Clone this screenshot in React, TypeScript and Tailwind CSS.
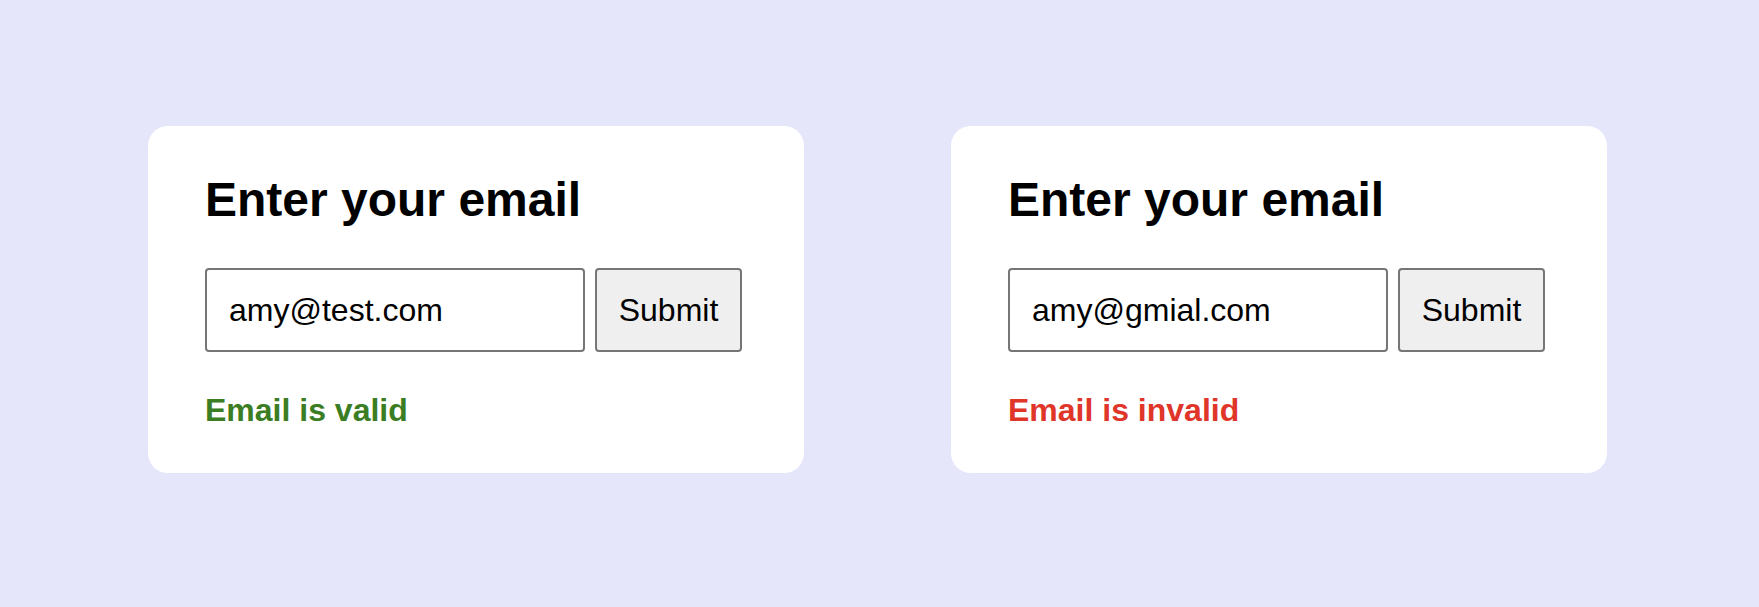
import React from "react";

type CardProps = {
  email: string;
  valid: boolean;
};

function EmailCard({ email, valid }: CardProps) {
  return (
    <div className="w-[656px] h-[347px] shrink-0 bg-white rounded-[20px] pl-[57px] pt-[46px] pb-[44px] flex flex-col">
      <h1 className="text-[48px] leading-[56px] font-bold text-black">Enter your email</h1>

      <div className="mt-[40px] flex items-stretch gap-[10px] h-[84px]">
        <input
          type="text"
          value={email}
          readOnly
          className="w-[380px] h-full border-2 border-[#767676] rounded-[4px] bg-white pl-[22px] text-[32px] text-black outline-none"
        />
        <button
          type="button"
          className="w-[147px] h-full border-2 border-[#767676] rounded-[4px] bg-[#efefef] text-[32px] text-black"
        >
          Submit
        </button>
      </div>

      <p
        className={`mt-[40px] text-[32px] leading-[37px] font-bold ${
          valid ? "text-[#3b7d23]" : "text-[#e0362a]"
        }`}
      >
        {valid ? "Email is valid" : "Email is invalid"}
      </p>
    </div>
  );
}

export default function App() {
  return (
    <div
      className="w-full h-screen bg-[#e6e6fa] flex items-start gap-[147px] pl-[148px] pt-[126px]"
      style={{ fontFamily: '"Liberation Sans", Arial, sans-serif' }}
    >
      <EmailCard email="amy@test.com" valid />
      <EmailCard email="amy@gmial.com" valid={false} />
    </div>
  );
}
